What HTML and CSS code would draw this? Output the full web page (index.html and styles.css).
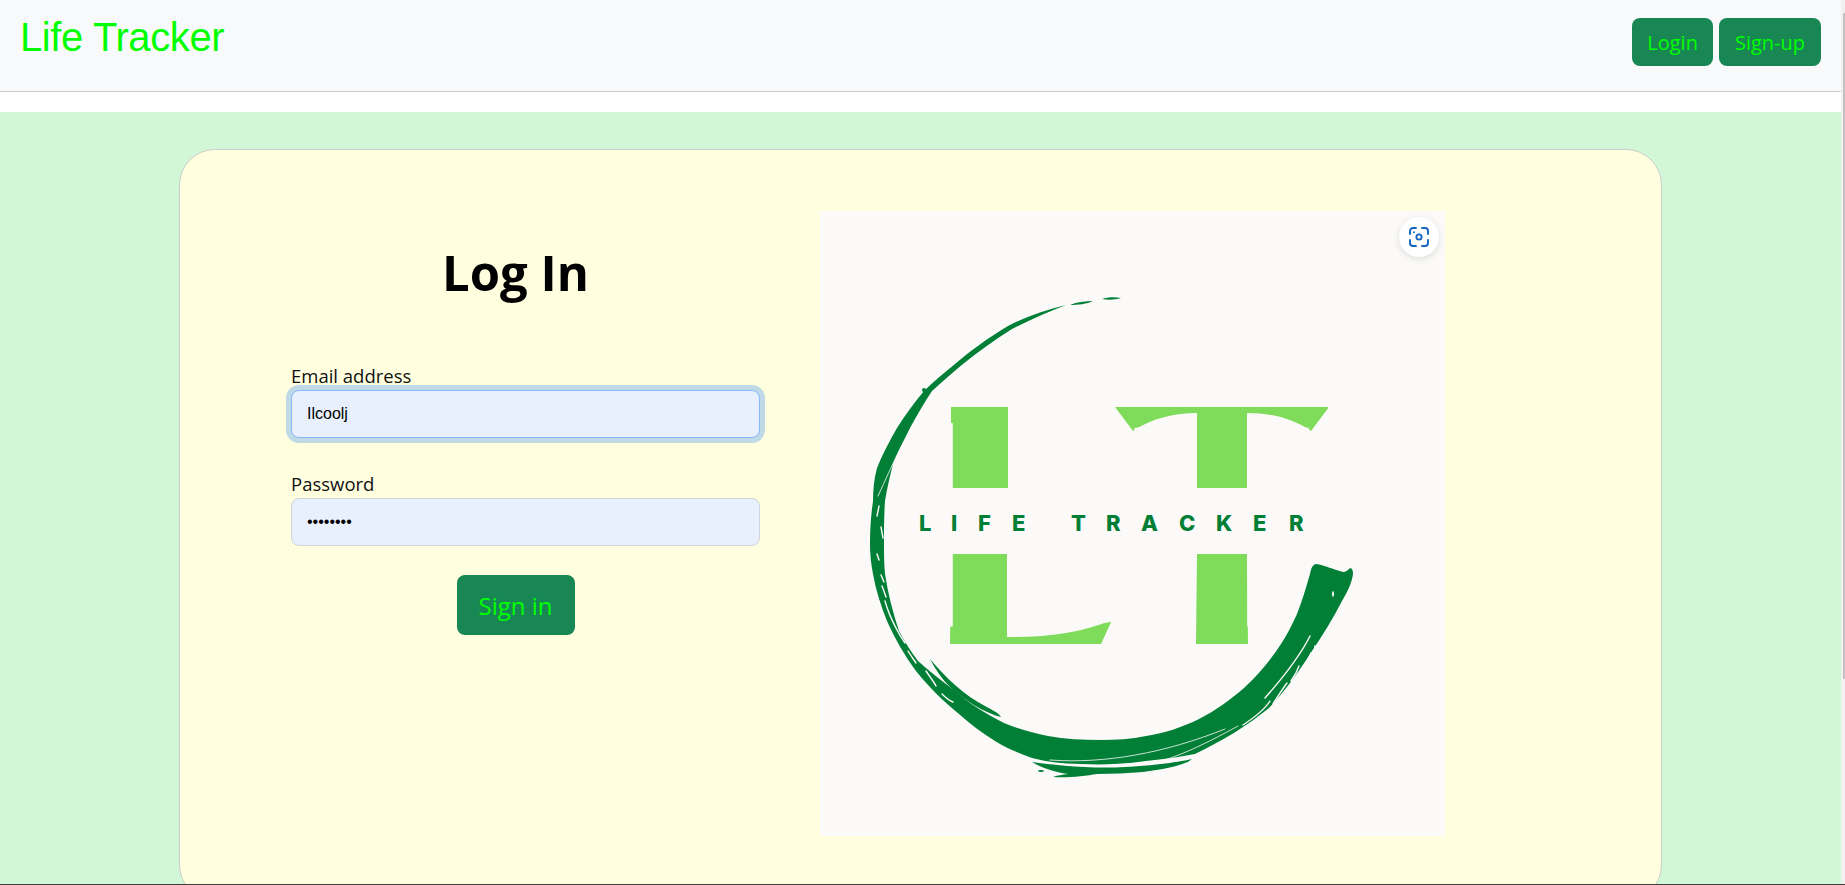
FILE: index.html
```html
<!DOCTYPE html>
<html lang="en">
<head>
<meta charset="utf-8">
<title>Life Tracker</title>
<link rel="stylesheet" href="styles.css">
</head>
<body>
<div class="frame">
  <div class="scroller">
    <nav class="navbar">
      <a class="brand" href="#">Life Tracker</a>
      <div class="nav-actions">
        <button class="btn btn-login" type="button">Login</button>
        <button class="btn" type="button">Sign-up</button>
      </div>
    </nav>
    <main class="page">
      <section class="card">
        <form class="form">
          <h1 class="title">Log In</h1>
          <div class="field">
            <label class="label" for="email">Email address</label>
            <input class="input input-focus" id="email" type="text" value="Ilcoolj">
          </div>
          <div class="field field-last">
            <label class="label" for="password">Password</label>
            <input class="input" id="password" type="password" value="password">
          </div>
          <div class="submit-row">
            <button class="btn btn-lg" type="button">Sign in</button>
          </div>
        </form>
        <div class="logo-wrap">
          <svg class="logo" viewBox="820 210 625 625" role="img" aria-label="Life Tracker logo">
            <defs>
              <clipPath id="clip-l">
                <rect x="951" y="406" width="57" height="81"/>
                <path d="M1007 553 V636 C1045 637 1080 632 1112 619 L1101 643 H950 L951 553 Z"/>
              </clipPath>
              <clipPath id="clip-t">
                <path d="M1115 406 H1329 L1311 430 C1292 417 1270 412 1247 412 V487 H1197 V412 C1175 412 1152 417 1133 430 Z"/>
                <path d="M1197 553 H1247 L1248 643 H1196 Z"/>
              </clipPath>
            </defs>
            <rect class="logo-bg" x="820" y="210" width="625" height="625"/>
            <g clip-path="url(#clip-l)">
              <text class="big-letter" transform="translate(916 643)">L</text>
            </g>
            <g clip-path="url(#clip-t)">
              <text class="big-letter" transform="translate(1110 643) scale(.92 1)">T</text>
            </g>
            <text class="logo-name" y="530" x="919 951 978 1012 1071 1106 1141 1179 1216 1253 1289">LIFETRACKER</text>
            <path class="ring" d="M1066 304 C1045 309 1025 316 1008 325 C988 337 970 350 955 363 C944 372 933 381 924 390 C914 402 905 414 897 427 C889 441 882 454 877 467 C874 478 873 489 873 500 C871 514 870 528 870 543 C870 553 871 563 873 573 C876 590 881 605 887 620 C895 638 905 655 916 670 C929 686 943 700 959 713 C970 723 982 732 995 740 C1006 747 1019 752 1032 757 C1048 761 1064 763 1081 763 C1103 764 1125 763 1146 760 C1164 758 1180 756 1195 753 C1222 740 1247 725 1269 707 C1285 690 1298 672 1310 653 C1322 635 1333 618 1342 600 C1348 590 1352 581 1353 573 C1353 569 1352 567 1350 567 C1348 569 1346 571 1343 571 C1334 569 1325 564 1316 563 C1312 564 1311 568 1310 573 C1306 587 1302 600 1297 613 C1292 624 1287 634 1281 643 C1270 660 1258 674 1244 687 C1230 699 1215 710 1199 718 C1183 726 1165 732 1146 735 C1131 738 1116 739 1101 739 C1083 739 1065 738 1048 735 C1033 732 1018 728 1004 722 C986 713 970 703 955 690 C942 680 929 670 918 660 C911 651 905 641 899 630 C893 612 888 593 885 573 C884 563 884 553 884 543 C884 529 884 514 885 500 C887 487 890 475 893 463 C898 451 904 439 910 427 C917 414 924 402 932 390 C942 381 952 372 963 363 C978 351 994 339 1012 328 C1030 319 1048 311 1066 304 Z"/>
            <path class="ring" d="M1070 304 C1077 301 1085 300 1093 300 C1087 303 1078 304 1070 304 Z M1102 298 C1108 296 1115 296 1121 297 C1115 299 1108 299 1102 298 Z"/>
            <path class="ring" d="M930 658 C945 676 965 695 985 705 C992 709 999 712 1001 716 C985 712 965 700 950 686 C942 678 935 668 930 658 Z"/>
            <path class="ring" d="M1032 761 C1054 764 1090 768 1125 766 C1145 765 1175 762 1192 758 C1186 764 1165 768 1143 771 C1128 772 1112 773 1097 773 C1085 775 1068 777 1053 776 C1058 774 1062 774 1068 773 C1055 771 1042 767 1032 761 Z"/>
            <ellipse class="ring" cx="1041" cy="770" rx="3" ry="1"/>
            <ellipse class="ring" cx="924" cy="389" rx="2" ry="2"/>
            <g class="slits">
              <path d="M1265 697 C1280 680 1300 655 1310 635"/>
              <path d="M1273 703 C1280 692 1284 686 1287 682"/>
              <path d="M1291 680 C1296 673 1298 668 1299 665"/>
              <path d="M1305 664 C1308 658 1310 655 1311 652"/>
              <path d="M1243 724 C1255 716 1265 708 1270 700"/>
              <path class="thin-slit" d="M1050 759 C1105 763 1165 752 1225 728"/>
              <path class="thin-slit" d="M1145 763 C1160 761 1180 757 1238 725"/>
              <path d="M885 600 C890 618 900 635 905 642"/>
              <path d="M908 650 C911 655 914 659 916 662"/>
              <path d="M926 670 C930 676 934 681 936 685"/>
              <path d="M942 693 C947 698 950 700 953 701"/>
              <path d="M882 585 C884 590 885 593 886 596"/>
              <path d="M877 553 L879 559"/>
              <path d="M881 574 L884 581"/>
              <path d="M1245 750 L1249 743"/>
              <path d="M1254 744 L1256 741"/>
              <path class="thin-slit" d="M904 440 C896 455 885 480 878 495"/>
              <path class="thin-slit" d="M917 432 C914 440 910 450 899 470"/>
              <path d="M958 370 L961 366"/>
              <path d="M940 385 L942 383"/>
              <path d="M930 402 L923 414"/>
              <path d="M879 505 L877 515"/>
              <path d="M881 526 L883 537"/>
            </g>
            <ellipse class="logo-bg" cx="1333" cy="593" rx="1" ry="3"/>
            <ellipse class="logo-bg" cx="1315" cy="647" rx="1" ry="3"/>
          </svg>
          <button class="lens" type="button" aria-label="Search image">
            <svg class="lens-icon" viewBox="0 0 20 20">
              <path d="M7 1 H4 A3 3 0 0 0 1 4 V7 M13 1 H16 A3 3 0 0 1 19 4 V7 M1 13 V16 A3 3 0 0 0 4 19 H7 M19 13 V16 A3 3 0 0 1 16 19 H13"/>
              <circle cx="10" cy="10" r="2.6"/>
              <circle class="lens-dot" cx="5" cy="5.2" r="1"/>
            </svg>
          </button>
        </div>
      </section>
    </main>
  </div>
  <div class="scrollbar"><div class="thumb"></div></div>
</div>
</body>
</html>
```

FILE: styles.css
```css
* {
  box-sizing: border-box;
}

html,
body {
  margin: 0;
  height: 100%;
  overflow: hidden;
}

body {
  font-family: "Open Sans", "Noto Sans", sans-serif;
  color: #111111;
  background: #fff;
}

.frame {
  display: flex;
  height: 100vh;
  border-bottom: 1px solid #443c3c;
}

.scroller {
  flex: 1;
  min-width: 0;
  overflow: hidden;
}

.scrollbar {
  display: flex;
  justify-content: flex-end;
  width: 4px;
  padding-top: 13px;
  background: #f1f1f1;
}

.thumb {
  width: 2px;
  height: 666px;
  background: #c1c1c1;
}

.navbar {
  display: flex;
  justify-content: space-between;
  align-items: flex-start;
  height: 92px;
  padding: 17px 20px 0 20px;
  background: #f8f9fa;
  border-bottom: 1px solid #c9c9c9;
  margin-bottom: 20px;
}

.brand {
  font-family: "Liberation Sans", Arial, sans-serif;
  font-size: 40px;
  line-height: 40px;
  color: #00ff00;
  text-decoration: none;
  letter-spacing: -0.4px;
}

.nav-actions {
  display: flex;
  gap: 6px;
  padding-top: 1px;
}

.btn {
  height: 48px;
  padding: 0 16px;
  border: 0;
  border-radius: 8px;
  background: #198754;
  color: #00ff00;
  font-family: "Open Sans", "Noto Sans", sans-serif;
  font-size: 20px;
}

.btn-login {
  padding: 0 15px;
}

.btn-lg {
  width: 118px;
  height: 60px;
  padding: 0;
  font-size: 24px;
}

.page {
  padding: 37px 0 240px;
  background: #d1f7d6;
}

.card {
  display: flex;
  gap: 60px;
  width: 1483px;
  height: 752px;
  margin-left: 179px;
  padding: 61px 0 0 111px;
  background: #ffffe0;
  border: 1px solid #cccccc;
  border-radius: 36px;
}

.form {
  width: 469px;
}

.title {
  margin: 29px 20px 60px 0;
  font-size: 49px;
  line-height: 64px;
  font-weight: 700;
  color: #000;
  text-align: center;
}

.field {
  margin-bottom: 34px;
}

.field-last {
  margin-bottom: 27px;
}

.label {
  display: block;
  height: 26px;
  font-size: 18.5px;
  line-height: 23px;
}

.input {
  display: block;
  width: 100%;
  height: 48px;
  padding: 0 15px;
  background: #e8f0fe;
  border: 1px solid #ced4da;
  border-radius: 8px;
  color: #000;
  font-family: "Liberation Sans", Arial, sans-serif;
  font-size: 16px;
  outline: none;
}

.input-focus {
  border-color: #86b7fe;
  box-shadow: 0 0 0 5px #c0d9e6;
}

.submit-row {
  display: flex;
  justify-content: center;
  padding-right: 20px;
  padding-top: 2px;
}

.logo-wrap {
  position: relative;
  width: 625px;
  height: 625px;
}

.logo {
  display: block;
  width: 625px;
  height: 625px;
}

.logo-bg {
  fill: #fbfaf8;
}

.big-letter {
  font-family: "Liberation Serif", serif;
  font-size: 364px;
  font-weight: 700;
  fill: #7fdb5a;
}

.logo-name {
  font-family: "Inter", sans-serif;
  font-size: 22px;
  font-weight: 800;
  fill: #017f36;
}

.ring {
  fill: #017f36;
}

.slits path {
  fill: none;
  stroke: #fbfaf8;
  stroke-width: 1.4px;
  stroke-linecap: round;
}

.slits .thin-slit {
  stroke-width: 0.8px;
}

.lens {
  position: absolute;
  top: 6px;
  right: 6px;
  display: flex;
  align-items: center;
  justify-content: center;
  width: 40px;
  height: 40px;
  padding: 0;
  border: 0;
  border-radius: 50%;
  background: #fff;
  box-shadow: 0 2px 6px rgba(60, 64, 67, 0.15);
}

.lens-icon {
  display: block;
  width: 20px;
  height: 20px;
  fill: none;
  stroke: #1565c0;
  stroke-width: 1.9;
  stroke-linecap: round;
}

.lens-dot {
  fill: #1565c0;
  stroke: none;
}
```
